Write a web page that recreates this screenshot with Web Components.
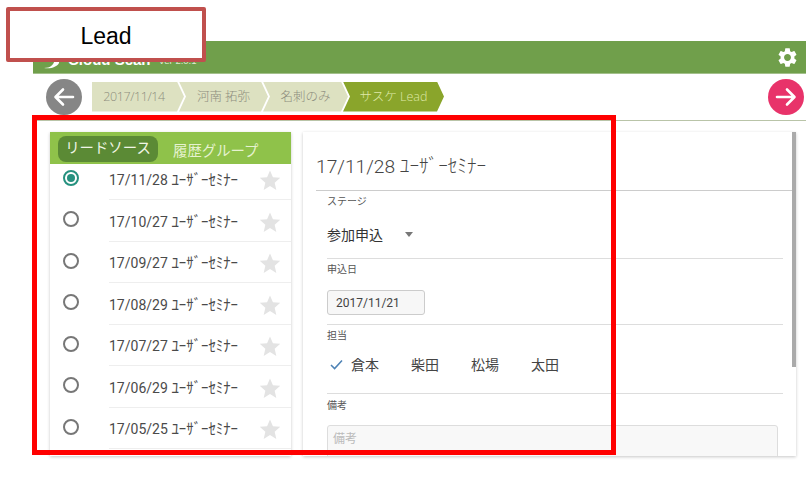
<!DOCTYPE html>
<html lang="ja">
<head>
<meta charset="utf-8">
<title>Lead</title>
<style>
html,body{margin:0;padding:0;background:#fff;width:806px;height:477px;overflow:hidden;font-family:Roboto,"Noto Sans CJK JP",sans-serif;}
</style>
</head>
<body>
<lead-screen></lead-screen>
<script>
const FONT = 'Roboto,"Noto Sans CJK JP",sans-serif';
function def(name, html, setup){
  customElements.define(name, class extends HTMLElement{
    constructor(){super();this.attachShadow({mode:'open'}).innerHTML=html;}
    connectedCallback(){ if(setup) setup(this); }
  });
}
def('top-bar',`<style>
:host{display:flex;align-items:center;height:32px;background:#709f4b;border-bottom:1px solid #a3c08b;color:#fff;font-family:"Liberation Sans",sans-serif;padding:0 8px 0 10px;}
.logo{width:18px;height:14px;margin:10px 7px 0 0;flex:none}
b{font-size:15px;line-height:16px;margin-top:6px}
small{font-size:9.5px;margin:7px 0 0 8px;color:#dfe9d2}
.sp{flex:1}
svg.gear{width:23px;height:23px;display:block;margin-right:-1px}
</style>
<svg class="logo" viewBox="0 0 18 14"><path fill="#fff" d="M1 13C7 13 12 10 12 2c3 2 5 4 4 6-2 4-8 6-15 5z"/></svg>
<b>Cloud Scan</b><small>Ver 2.0.1</small><span class="sp"></span>
<svg class="gear" viewBox="0 0 24 24"><path fill="#fff" d="M19.14 12.94c.04-.3.06-.61.06-.94 0-.32-.02-.64-.07-.94l2.03-1.58c.18-.14.23-.41.12-.61l-1.92-3.32c-.12-.22-.37-.29-.59-.22l-2.39.96c-.5-.38-1.03-.7-1.62-.94l-.36-2.54c-.04-.24-.24-.41-.48-.41h-3.84c-.24 0-.43.17-.47.41l-.36 2.54c-.59.24-1.13.57-1.62.94l-2.39-.96c-.22-.08-.47 0-.59.22L2.74 8.87c-.12.21-.08.47.12.61l2.03 1.58c-.05.3-.09.63-.09.94s.02.64.07.94l-2.03 1.58c-.18.14-.23.41-.12.61l1.92 3.32c.12.22.37.29.59.22l2.39-.96c.5.38 1.03.7 1.62.94l.36 2.54c.05.24.24.41.48.41h3.84c.24 0 .44-.17.47-.41l.36-2.54c.59-.24 1.13-.56 1.62-.94l2.39.96c.22.08.47 0 .59-.22l1.92-3.32c.12-.22.07-.47-.12-.61l-2.01-1.58zM12 15.6c-1.98 0-3.6-1.62-3.6-3.6s1.62-3.6 3.6-3.6 3.6 1.62 3.6 3.6-1.62 3.6-3.6 3.6z"/></svg>`);

def('round-btn',`<style>
:host{display:block;width:36px;height:36px;border-radius:50%;flex:none}
:host([dir=back]){background:#868686}
:host([dir=next]){background:#e8336a}
svg{display:block;width:36px;height:36px}
</style><svg viewBox="0 0 36 36"><path id="p" fill="none" stroke="#fff" stroke-width="2.6" stroke-linecap="round" stroke-linejoin="round"/></svg>`, el=>{
  el.shadowRoot.getElementById('p').setAttribute('d', el.getAttribute('dir')==='back' ? 'M27 18H10M17 10.5L9.5 18l7.5 7.5' : 'M9 18h17M19 10.5l7.5 7.5-7.5 7.5');
});

def('crumb-step',`<style>
:host{display:block;height:30px;flex:none;margin-right:-5px;font:300 12.5px/30px "Open Sans","Noto Sans CJK JP",sans-serif;color:#8e8e7e;background:#dde1c1;white-space:nowrap;box-sizing:border-box;text-align:center;
clip-path:polygon(0 0,calc(100% - 7px) 0,100% 50%,calc(100% - 7px) 100%,0 100%,7px 50%);}
:host([first]){letter-spacing:-.4px;padding-right:8px;clip-path:polygon(0 0,calc(100% - 7px) 0,100% 50%,calc(100% - 7px) 100%,0 100%);}
:host([active]){background:#8aa52b;color:#dfe9a8;margin-right:0}
</style><slot></slot>`);

def('step-row',`<style>
:host{display:flex;align-items:center;height:47px;box-sizing:border-box;padding:0 2px 1px 13px;border-bottom:1px solid #b9c4a8}
.c{display:flex;margin-left:10px;flex:1;padding-top:0}
</style><round-btn dir="back"></round-btn><div class="c"><slot></slot></div><round-btn dir="next"></round-btn>`);

def('source-row',`<style>
:host{display:flex;align-items:center;height:41.5px;box-sizing:border-box;padding-left:13px;font:14px ${FONT};color:#4a4a4a}
.r{width:16px;height:16px;box-sizing:border-box;border:2px solid #777;border-radius:50%;flex:none;margin:-3px 30px 0 0;position:relative}
:host([on]) .r{border-color:#26917f}
:host([on]) .r::after{content:"";position:absolute;inset:2px;border-radius:50%;background:#26917f}
.b{flex:1;align-self:stretch;display:flex;align-items:center;border-bottom:1px solid #eee;white-space:nowrap;min-width:0}
.t{flex:1}
svg{width:22px;height:22px;margin:3px 10px 0 0;flex:none;display:block}
::slotted(span){font-size:14.8px}
</style><span class="r"></span><div class="b"><span class="t"><slot></slot></span><svg viewBox="0 0 24 24"><path fill="#e3e3e3" d="M12 1.5l3.2 7.4 8 .7-6.1 5.3 1.8 7.9L12 18.6l-6.9 4.2 1.8-7.9L.8 9.6l8-.7z"/></svg></div>`);

def('source-card',`<style>
:host{display:block;width:241px;height:324px;overflow:hidden;background:#fff;box-shadow:0 1px 3px rgba(0,0,0,.22);font-family:${FONT}}
.h{position:relative;z-index:1;display:flex;align-items:center;height:32px;background:#8fc24a;box-sizing:border-box;padding:2px 0 0 8px;font-size:14.4px;white-space:nowrap}
.a{background:#5b8a35;color:#f0f5e6;border-radius:8px;height:26px;line-height:26px;width:100px;text-align:center;box-sizing:border-box}
.o{color:#e6f2d0;margin-left:15px}
.l{margin-top:-5.5px}
</style><div class="h"><span class="a">リードソース</span><span class="o">履歴グループ</span></div><div class="l"><slot></slot></div>`);

def('form-field',`<style>
:host{display:block;border-bottom:1px solid #ddd;box-sizing:border-box;font-family:${FONT};position:relative}
:host([bare]){border-bottom:0}
.lb{display:block;font-size:10px;line-height:14px;color:#555;padding-top:4px}
</style><span class="lb" id="l"></span><slot></slot>`, el=>{el.shadowRoot.getElementById('l').textContent=el.getAttribute('label');});

def('detail-card',`<style>
:host{display:block;width:493px;height:324px;overflow:hidden;background:#fff;box-shadow:0 1px 3px rgba(0,0,0,.22);font-family:${FONT};position:relative;box-sizing:border-box}
.t{font-weight:300;font-size:19.2px;line-height:28px;height:59px;box-sizing:border-box;margin-left:13px;padding:21px 0 0 0;color:#444;border-bottom:1px solid #ccc;white-space:nowrap}
.f{padding:0 13px 0 24px}
.s{position:absolute;right:0;top:0;width:4px;height:235px;background:#aaa}
</style><div class="t"><slot name="title"></slot></div><div class="f"><slot></slot></div><div class="s"></div>`);

def('stage-select',`<style>
:host{display:flex;align-items:center;height:49px;font-size:14px;color:#333;padding:0;box-sizing:border-box}
i{display:block;width:0;height:0;border:4px solid transparent;border-top:5px solid #777;border-bottom:0;margin-left:22px;margin-top:1px}
</style><slot></slot><i></i>`);

def('date-box',`<style>
:host{display:block;width:98px;height:25px;line-height:25px;box-sizing:border-box;padding-left:8px;border:1px solid #ccc;border-radius:3px;background:#f7f7f7;font-size:12px;color:#444}
</style><slot></slot>`);

def('staff-tabs',`<style>
:host{display:flex;height:43px;align-items:center;font-size:14px;color:#444;gap:32px;padding:0 0 1px 24px;position:relative;box-sizing:border-box}
svg{position:absolute;left:3px;top:16px;width:13px;height:11px}
</style><svg viewBox="0 0 13 11"><path d="M1 6l3.6 3.6L12 1.5" fill="none" stroke="#4d82b5" stroke-width="1.5"/></svg><slot></slot>`);

def('note-box',`<style>
:host{display:block;width:451px;height:60px;box-sizing:border-box;border:1px solid #ddd;border-radius:3px;background:#f8f8f8;padding:5px 5px;font-size:12px;line-height:16px;color:#bbb}
</style><slot></slot>`);

def('lead-callout',`<style>
:host{position:absolute;left:6px;top:7px;width:200px;height:55px;box-sizing:border-box;border:4px solid #c0504d;border-radius:2px;background:#fff;display:flex;align-items:center;justify-content:center;padding-top:4px;font:23px "Liberation Sans",sans-serif;color:#000}
</style><slot></slot>`);

def('red-frame',`<style>
:host{position:absolute;left:32px;top:115px;width:584px;height:340px;box-sizing:border-box;border:5px solid #f00;pointer-events:none}
</style>`);

const rows=['17/11/28','17/10/27','17/09/27','17/08/29','17/07/27','17/06/29','17/05/25'];
const K=' ﾕｰｻﾞｰｾﾐﾅｰ';
def('lead-screen',`<style>
:host{display:block;position:relative;width:806px;height:477px;font-family:${FONT}}
.app{margin-left:33px;padding-top:41px}
.cols{display:flex;gap:12px;padding:11px 0 0 17px}
</style>
<div class="app">
<top-bar></top-bar>
<step-row>
<crumb-step first style="width:92px">2017/11/14</crumb-step>
<crumb-step style="width:89px">河南 拓弥</crumb-step>
<crumb-step style="width:85px">名刺のみ</crumb-step>
<crumb-step active style="width:101px">サスケ Lead</crumb-step>
</step-row>
<div class="cols">
<source-card>${rows.map((d,i)=>`<source-row${i?'':' on'}>${d}<span>${K}</span></source-row>`).join('')}</source-card>
<detail-card>
<span slot="title">17/11/28${K}</span>
<form-field label="ステージ"><stage-select>参加申込</stage-select></form-field>
<form-field label="申込日" style="height:66px"><date-box style="margin-top:13px">2017/11/21</date-box></form-field>
<form-field label="担当" style="height:69px"><staff-tabs><span>倉本</span><span>柴田</span><span>松場</span><span>太田</span></staff-tabs></form-field>
<form-field label="備考" bare style="padding-top:1px"><note-box style="margin-top:12px">備考</note-box></form-field>
</detail-card>
</div>
</div>
<lead-callout>Lead</lead-callout>
<red-frame></red-frame>`);
</script>
</body>
</html>
